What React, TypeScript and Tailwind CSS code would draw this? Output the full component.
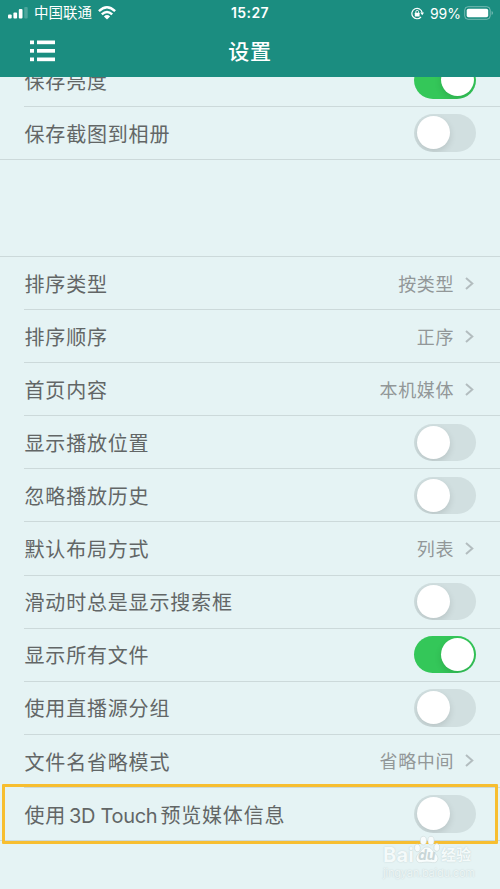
type Item = { label: string; latin?: string; rest?: string; value?: string; on?: boolean };

const captureItems: Item[] = [
  { label: "保存亮度", on: true },
  { label: "保存截图到相册", on: false },
];

const displayItems: Item[] = [
  { label: "排序类型", value: "按类型" },
  { label: "排序顺序", value: "正序" },
  { label: "首页内容", value: "本机媒体" },
  { label: "显示播放位置", on: false },
  { label: "忽略播放历史", on: false },
  { label: "默认布局方式", value: "列表" },
  { label: "滑动时总是显示搜索框", on: false },
  { label: "显示所有文件", on: true },
  { label: "使用直播源分组", on: false },
  { label: "文件名省略模式", value: "省略中间" },
  { label: "使用", latin: " 3D Touch", rest: "预览媒体信息", on: false },
];

function Toggle({ on }: { on?: boolean }) {
  return (
    <span
      className={
        on
          ? "flex h-[37.5px] w-[62px] items-center justify-end overflow-hidden rounded-full bg-[#34c759] px-[2.5px]"
          : "flex h-[37.5px] w-[62px] items-center overflow-hidden rounded-full bg-[#d1dfe0] px-[2.5px]"
      }
    >
      <span className="size-[33px] rounded-full bg-white shadow-[0_3px_7px_rgba(0,0,0,0.12)]" />
    </span>
  );
}

function Chevron() {
  return (
    <svg className="mr-[2px] ml-[11px] h-[13px] w-[9px]" viewBox="0 0 9 13" fill="none" stroke="#b3bdbf" strokeWidth="2">
      <path d="M1 1 L7.3 6.5 L1 12" />
    </svg>
  );
}

function Row({ item, last }: { item: Item; last: boolean }) {
  return (
    <div className={last ? "border-b border-[#ccd9da] pl-6" : "pl-6"}>
      <div
        className={
          last
            ? "flex h-[52.1px] items-center justify-between pr-6"
            : "flex h-[53.1px] items-center justify-between border-b border-[#ccd9da] pr-6"
        }
      >
        <span className="pt-[3.4px] pl-[0.5px] text-[20px] tracking-[0.82px] whitespace-pre text-[#626666]">
          {item.label}
          {item.latin && <span className="mr-[3px] -ml-[2.5px] tracking-[-0.3px]">{item.latin}</span>}
          {item.rest}
        </span>
        {item.value ? (
          <span className="flex items-center text-[18px] tracking-[0.6px] text-[#929798]">
            <span className="pt-[2px]">{item.value}</span>
            <Chevron />
          </span>
        ) : (
          <Toggle on={item.on} />
        )}
      </div>
    </div>
  );
}

function StatusBar() {
  return (
    <div className="grid h-[26px] grid-cols-3 items-center pl-2 pr-[6px] text-[14px]">
      <div className="flex items-center">
        <svg className="h-[12px] w-[20px]" viewBox="0 0 20 12" fill="white">
          <rect x="0" y="7.5" width="3.7" height="4" rx="1" />
          <rect x="5.4" y="5.5" width="3.7" height="6" rx="1" />
          <rect x="10.8" y="2" width="3.7" height="9.5" rx="1" />
          <rect x="16.2" y="0" width="3.5" height="11.5" rx="1" opacity=".22" />
        </svg>
        <span className="ml-[6px] text-[14.5px] leading-5">中国联通</span>
        <svg className="ml-[6px] h-[14px] w-[18px]" viewBox="0 0 18 14" fill="none" stroke="white" strokeWidth="2.4">
          <path d="M.9 5.2 Q9-2.6 17.1 5.2" />
          <path d="M3.8 8.4 Q9 3.4 14.2 8.4" />
          <path d="M9 13.6 L5.9 10.4 Q9 7.6 12.1 10.4 Z" fill="white" stroke="none" />
        </svg>
      </div>
      <span className="pr-[2px] pb-px text-center text-[14px] font-semibold tracking-[0.4px]">15:27</span>
      <div className="flex items-center justify-end">
        <svg className="h-[13px] w-[13px]" viewBox="0 0 13 13" fill="none" stroke="white" strokeWidth="1.2">
          <path d="M11.2 5.6 A5.2 5.2 0 1 0 10 10" />
          <path d="M9.2 5.6 L13 5.6 L11.3 8.2 Z" fill="white" stroke="none" />
          <rect x="3.8" y="5.8" width="4.8" height="3.6" rx=".5" fill="white" stroke="none" />
          <path d="M4.8 6 V4.8 a1.4 1.4 0 0 1 2.8 0 V6" strokeWidth=".9" />
        </svg>
        <span className="ml-[6px] text-[14px]">99%</span>
        <svg className="ml-[3px] h-[14px] w-[30px]" viewBox="0 0 30 14">
          <rect x=".7" y=".7" width="25.5" height="12.6" rx="3.5" fill="none" stroke="white" strokeOpacity=".4" />
          <rect x="2.7" y="2.7" width="21.5" height="8.6" rx="1.8" fill="white" />
          <path d="M27.6 5 Q29 5.4 29 7 Q29 8.6 27.6 9 Z" fill="white" opacity=".4" />
        </svg>
      </div>
    </div>
  );
}

function Watermark() {
  return (
    <div className="absolute top-[835px] left-[383px] w-[92px] text-[#f4fafa] [text-shadow:0_0_1.5px_#bccbcc]">
      <div className="flex h-[32px] items-end font-bold">
        <span className="w-[31px] text-[20px] leading-[24px] tracking-[0.2px]">Bai</span>
        <span className="relative h-[32px] w-[26px]">
          <svg className="absolute inset-0" width="26" height="32" viewBox="0 0 26 32" fill="#f8fcfc" stroke="#cbd8d9" strokeWidth=".6">
            <ellipse cx="3.4" cy="13" rx="2.9" ry="3.8" transform="rotate(-12 3.4 13)" />
            <ellipse cx="9.4" cy="5.6" rx="3.1" ry="4.3" />
            <ellipse cx="17" cy="5.6" rx="3.1" ry="4.3" />
            <ellipse cx="22.8" cy="12.4" rx="2.9" ry="3.8" transform="rotate(12 22.8 12.4)" />
            <path d="M13 12 C8.5 12 7.8 16 4.4 18.8 C0 23 2.6 28.6 7.4 27.6 Q13 26.4 18.6 27.6 C23.6 28.6 26 23 21.6 18.8 C18.2 16 17.5 12 13 12 Z" />
          </svg>
          <span className="absolute top-[13px] left-[4px] text-[14px] leading-[14px] italic text-[#c9d6d7] [text-shadow:none]">du</span>
        </span>
        <span className="ml-[1px] text-[15px] leading-[24px] whitespace-nowrap">经验</span>
      </div>
      <div className="text-[11px] leading-[12px] whitespace-nowrap tracking-[-0.2px] text-[#edf5f5]">jingyan.baidu.com</div>
    </div>
  );
}

export default function App() {
  return (
    <div className="relative flex h-[889px] w-[500px] flex-col overflow-hidden bg-[#e5f3f4] font-[Inter,'Noto_Sans_CJK_SC',sans-serif]">
      <header className="z-10 h-[77px] shrink-0 bg-[#1b8d80] text-white">
        <StatusBar />
        <div className="grid h-[50px] grid-cols-3 items-center">
          <svg className="ml-[30px] h-[22px] w-[25px]" viewBox="0 0 25 22" fill="white">
            <rect x="0" y="0.5" width="4" height="3.7" />
            <rect x="7" y="0.5" width="18" height="3.7" />
            <rect x="0" y="9" width="4" height="3.7" />
            <rect x="7" y="9" width="18" height="3.7" />
            <rect x="0" y="17.5" width="4" height="3.7" />
            <rect x="7" y="17.5" width="18" height="3.7" />
          </svg>
          <h1 className="pt-[2px] text-center text-[21px] font-medium tracking-[0.8px]">设置</h1>
        </div>
      </header>
      <main className="-mt-[23.2px]">
        <section>
          {captureItems.map((item, i) => (
            <Row key={item.label} item={item} last={i === captureItems.length - 1} />
          ))}
        </section>
        <section className="mt-24 border-t border-[#ccd9da]">
          {displayItems.map((item, i) => (
            <Row key={item.label} item={item} last={i === displayItems.length - 1} />
          ))}
        </section>
      </main>
      <div className="absolute top-[784px] left-[2px] h-[60px] w-[496px] rounded-[1px] border-3 border-[#f7be30]" />
      <Watermark />
    </div>
  );
}
